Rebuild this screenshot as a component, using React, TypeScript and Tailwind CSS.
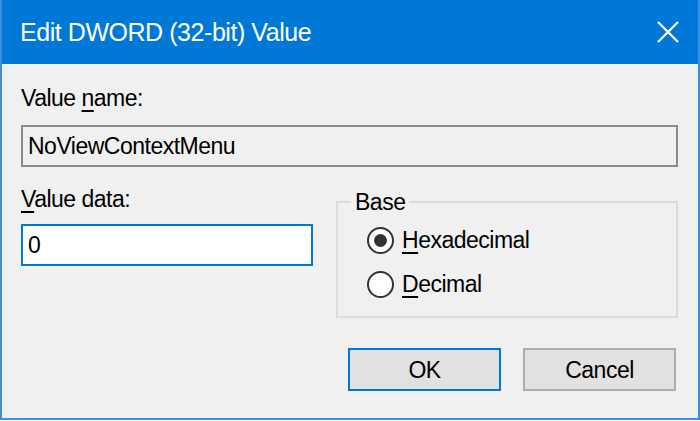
const Radio = ({ checked }: { checked?: boolean }) => (
  <span className="flex h-[27px] w-[27px] shrink-0 items-center justify-center rounded-full border-2 border-[#333333] bg-white">
    {checked && <span className="h-[13px] w-[13px] rounded-full bg-[#333333]" />}
  </span>
);

export default function App() {
  return (
    <div className="h-[421px] w-[700px] bg-white font-['Liberation_Sans',Arial,sans-serif] text-[23px] leading-[26px] tracking-[-0.5px] text-black">
      <div className="flex h-[420px] flex-col border-x-2 border-b-2 border-[#3d8fdc] bg-[#f0f0f0]">
        {/* title bar */}
        <div className="flex h-[64px] shrink-0 items-center justify-between bg-[#0078d7] pl-[18px] pr-[19px]">
          <span className="text-[25px] leading-none tracking-[-0.45px] text-white">Edit DWORD (32-bit) Value</span>
          <svg width="22" height="22" viewBox="0 0 22 22" className="text-white">
            <path d="M1 1 L21 21 M21 1 L1 21" stroke="currentColor" strokeWidth="2.2" fill="none" />
          </svg>
        </div>

        <div className="flex flex-col pl-[19px] pr-[20px] pt-[21px]">
          <div>
            Value <u className="decoration-[1.5px] underline-offset-[4px]">n</u>ame:
          </div>
          <div className="mt-[14px] flex h-[42px] items-center border-2 border-[#8a8a8a] bg-[#f0f0f0] pl-[5px]">
            NoViewContextMenu
          </div>

          <div className="mt-[19px] flex items-start">
            <div className="flex w-[292px] flex-col">
              <div>
                <u className="decoration-[1.5px] underline-offset-[4px]">V</u>alue data:
              </div>
              <div className="mt-[12px] flex h-[42px] items-center border-2 border-[#0078d7] bg-white pl-[5px]">
                0
              </div>
            </div>

            <fieldset className="ml-[23px] mt-[3px] h-[129px] flex-1 border-2 border-[#dcdcdc]">
              <legend className="ml-[13px] px-[4px]">Base</legend>
              <div className="mt-[3px] flex flex-col pl-[29px]">
                <label className="flex h-[44px] items-center gap-[8px]">
                  <Radio checked />
                  <span>
                    <u className="decoration-[1.5px] underline-offset-[4px]">H</u>exadecimal
                  </span>
                </label>
                <label className="flex h-[44px] items-center gap-[8px]">
                  <Radio />
                  <span>
                    <u className="decoration-[1.5px] underline-offset-[4px]">D</u>ecimal
                  </span>
                </label>
              </div>
            </fieldset>
          </div>

          <div className="mt-[30px] flex justify-end gap-[22px] pr-[2px]">
            <button className="h-[43px] w-[153px] border-2 border-[#0078d7] bg-[#e1e1e1]">OK</button>
            <button className="h-[43px] w-[153px] border-2 border-[#adadad] bg-[#e1e1e1]">Cancel</button>
          </div>
        </div>
      </div>
    </div>
  );
}
